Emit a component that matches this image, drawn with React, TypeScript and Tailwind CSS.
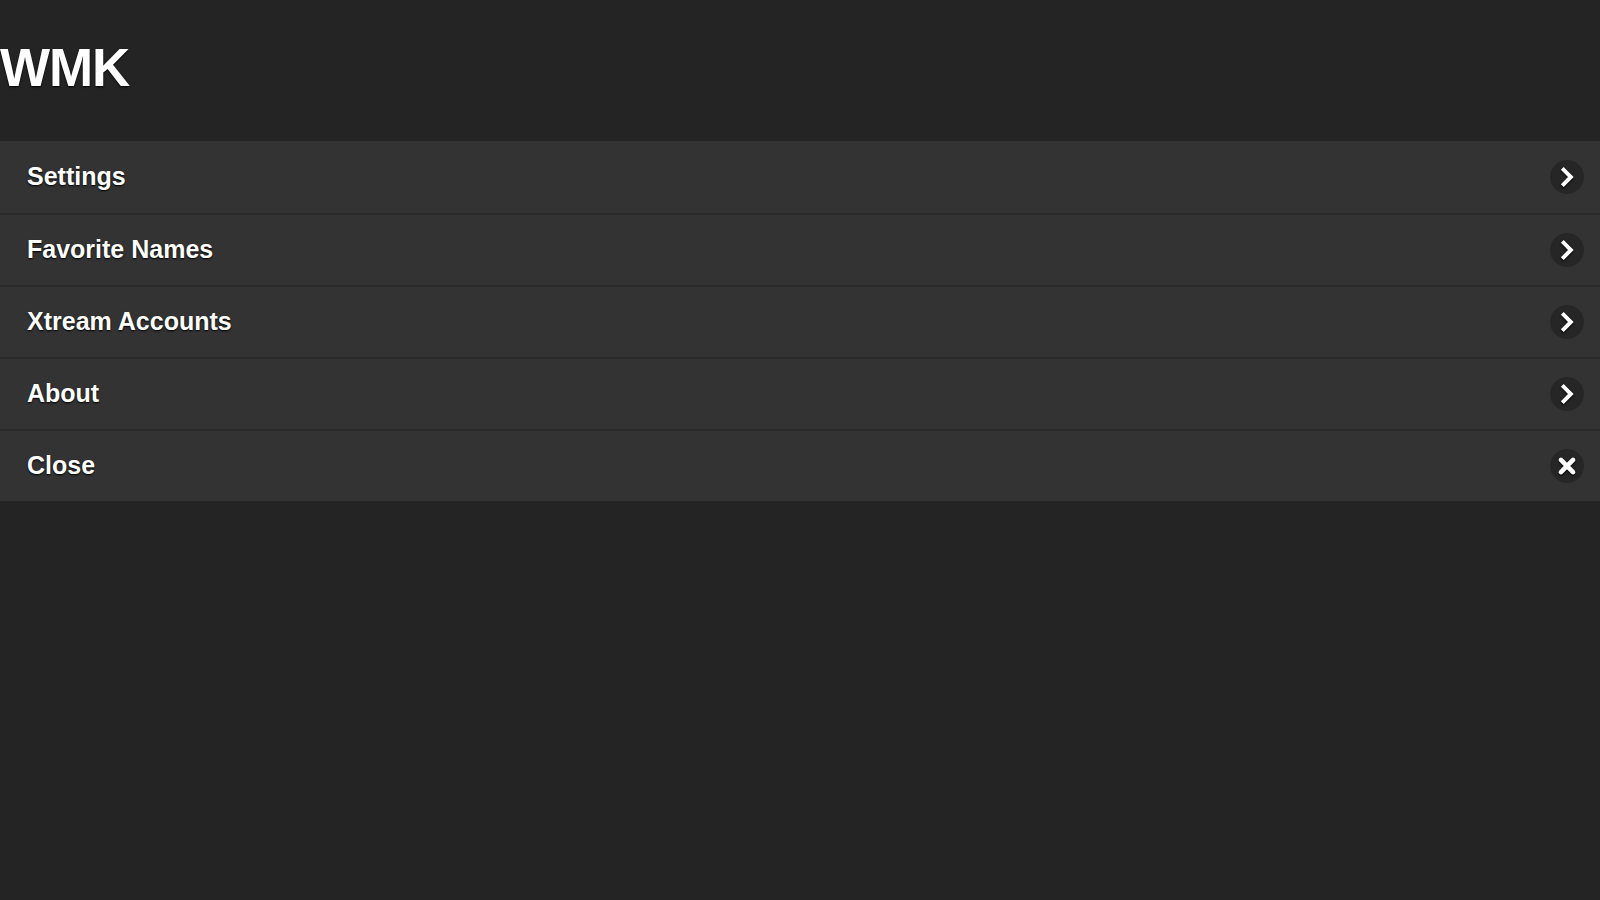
import React from 'react';

const items = [
  { label: 'Settings', icon: 'chevron' },
  { label: 'Favorite Names', icon: 'chevron' },
  { label: 'Xtream Accounts', icon: 'chevron' },
  { label: 'About', icon: 'chevron' },
  { label: 'Close', icon: 'close' },
];

const Chevron = () => (
  <svg width="22" height="22" viewBox="0 0 20 20" className="drop-shadow-[0_1px_1px_rgba(0,0,0,0.9)]">
    <path d="M7 3.5 L13.5 10 L7 16.5" fill="none" stroke="#fff" strokeWidth="3.6" strokeLinecap="square" />
  </svg>
);

const Cross = () => (
  <svg width="22" height="22" viewBox="0 0 20 20" className="drop-shadow-[0_1px_1px_rgba(0,0,0,0.9)]">
    <path d="M4.5 4.5 L15.5 15.5 M15.5 4.5 L4.5 15.5" fill="none" stroke="#fff" strokeWidth="4.2" strokeLinecap="round" />
  </svg>
);

export default function App() {
  return (
    <div className="min-h-screen w-full bg-[#242424] font-['Liberation_Sans',Arial,sans-serif] text-white">
      <header className="flex h-[141px] items-center pb-[6px]">
        <h1 className="text-[53px] font-bold leading-none tracking-[-0.02em] [text-shadow:0_1px_2px_#000]">WMK</h1>
      </header>
      <ul className="flex flex-col">
        {items.map((item, i) => (
          <li
            key={item.label}
            className={
              'flex h-[72px] items-center justify-between bg-[#333333] pl-[27px] pr-[16px] ' +
              (i > 0 ? 'border-t-2 border-[#2a2a2a]' : '')
            }
          >
            <span className="text-[25px] font-bold [text-shadow:0_1px_2px_#000]">{item.label}</span>
            <span className="flex h-[34px] w-[34px] items-center justify-center rounded-full bg-black/25">
              {item.icon === 'close' ? <Cross /> : <Chevron />}
            </span>
          </li>
        ))}
      </ul>
    </div>
  );
}
